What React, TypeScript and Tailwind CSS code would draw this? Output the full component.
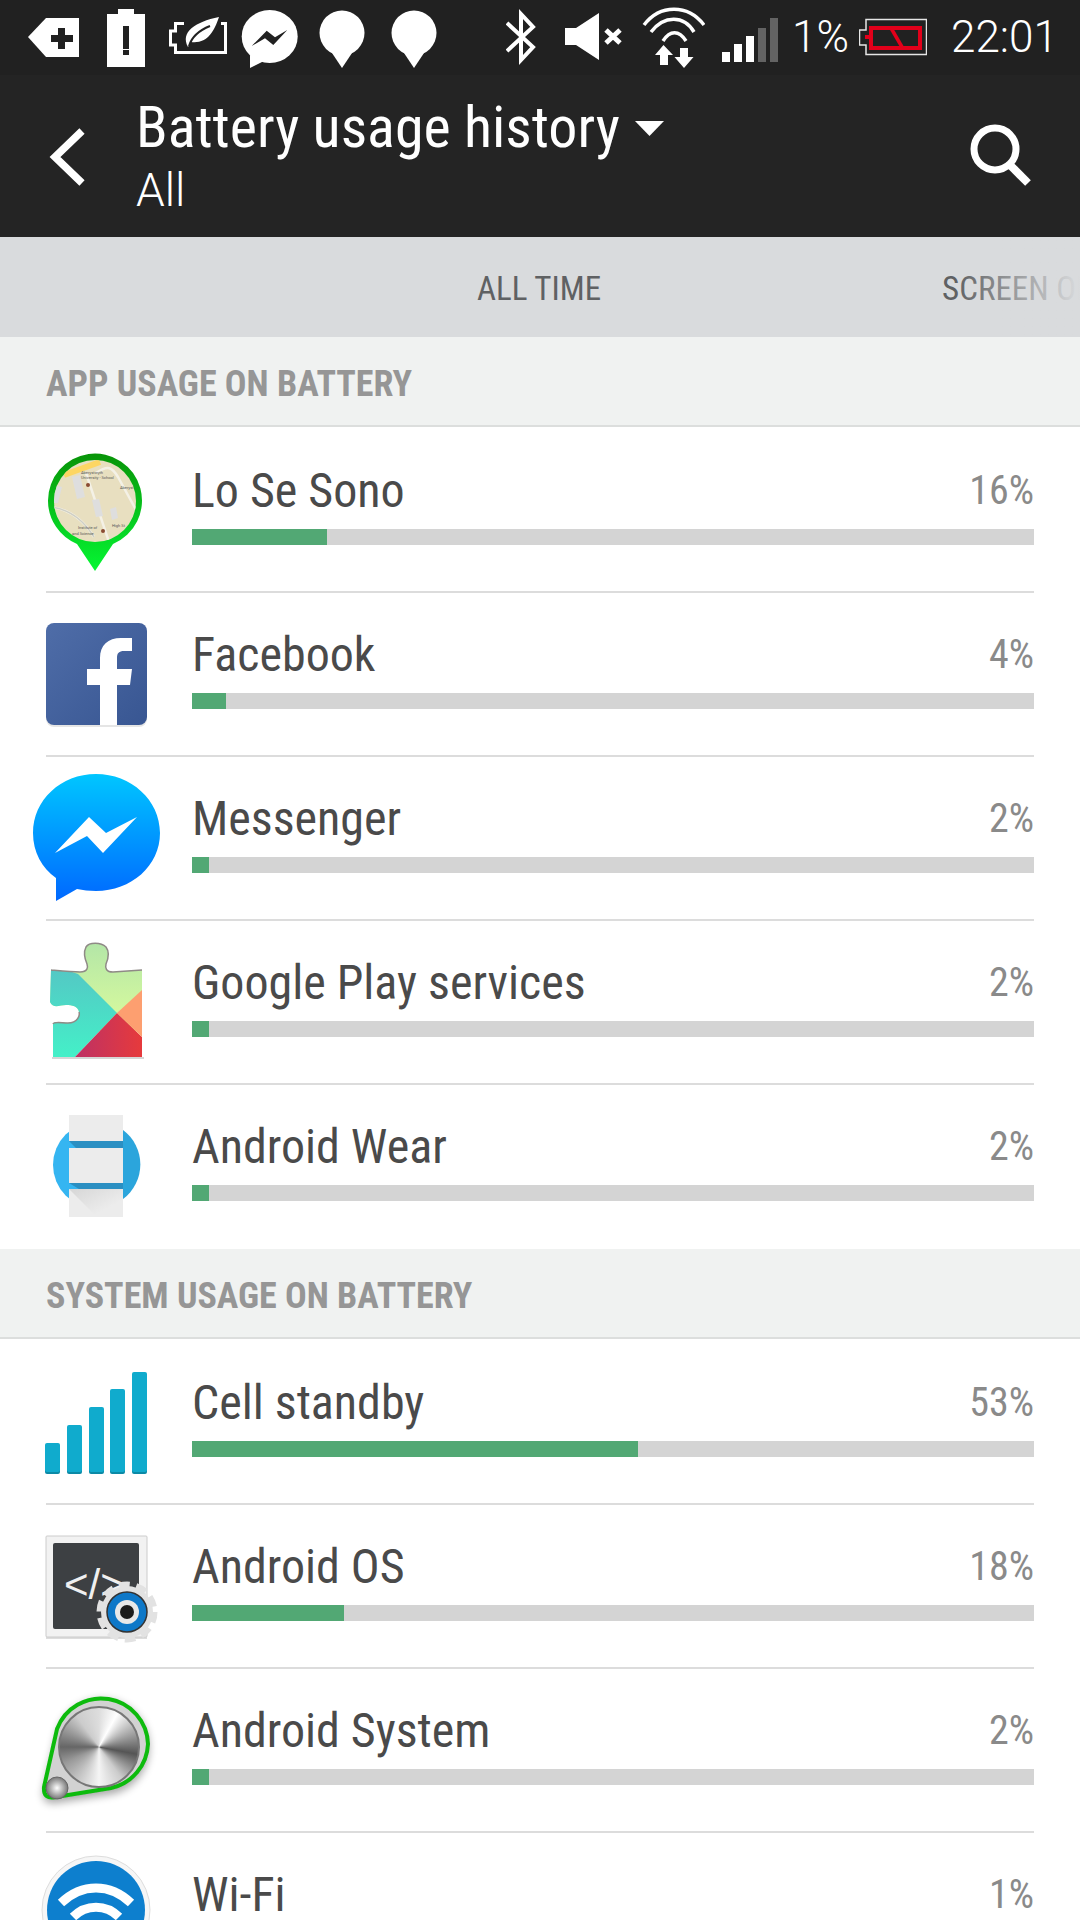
import React from 'react';

const CONDENSED = 'font-["Roboto",sans-serif] [font-stretch:75%]';

type RowData = { name: string; pct: number; icon: React.ReactNode };

// status bar icons use screen coordinates in their viewBox, so numbers read straight off the screenshot
const TagIcon = () => (
  <svg width="51" height="75" viewBox="28 0 51 75">
    <path d="M28 37 46 18H79V57H46Z" fill="#fff" />
    <path d="M51 35H58V28H65V35H73V42H65V49H58V42H51Z" fill="#212121" />
  </svg>
);

const AlertIcon = () => (
  <svg width="38" height="75" viewBox="107 0 38 75">
    <path d="M118 9H134V14H145V67H107V14H118Z" fill="#fff" />
    <path d="M123 26H129V49H123ZM123 50H129V55H123Z" fill="#212121" />
  </svg>
);

const LeafIcon = () => (
  <svg width="58" height="75" viewBox="169 0 58 75">
    <path d="M184 23.5H175.5V31H170.5V45H175.5V52.5H225.5V23.5H221" fill="none" stroke="#fff" strokeWidth="3" />
    <path d="M188 47C180 32 195 22 219 17 214 32 207 44 191 42Z" fill="#fff" />
    <path d="M189 46C192 36 200 30 210 26" fill="none" stroke="#212121" strokeWidth="2" />
  </svg>
);

const MessengerGlyph = () => (
  <svg width="58" height="75" viewBox="241 0 58 75">
    <ellipse cx="269.7" cy="36.5" rx="28" ry="26.5" fill="#fff" />
    <path d="M250 55V68L266 60Z" fill="#fff" />
    <path d="M251.7 46 266.7 30.7 275 37.3 287.3 30 273.3 45 265 38.3Z" fill="#212121" />
  </svg>
);

const PinIcon = ({ className }: { className: string }) => (
  <svg className={className} width="46" height="75" viewBox="0 0 46 75">
    <circle cx="23" cy="33" r="22.5" fill="#fff" />
    <path d="M11 50 23 68 35 50Z" fill="#fff" />
  </svg>
);

const BluetoothIcon = () => (
  <svg width="30" height="75" viewBox="504 0 30 75">
    <path d="M505 23 531 47 519 60V14L531 27 505 51" fill="none" stroke="#fff" strokeWidth="4" />
  </svg>
);

const MuteIcon = () => (
  <svg width="57" height="75" viewBox="563 0 57 75">
    <path d="M563 28H574L597 13V60L574 45H563Z" fill="#fff" />
    <path d="M604 30 618 43M618 30 604 43" stroke="#fff" strokeWidth="5" />
  </svg>
);

const WifiIcon = () => (
  <svg width="63" height="75" viewBox="640 0 63 75">
    <path d="M642 25C658 4 686 4 702 25" fill="none" stroke="#fff" strokeWidth="3.5" />
    <path d="M649 32C662 15 682 15 692 32" fill="none" stroke="#fff" strokeWidth="3.5" />
    <path d="M661 41C668 30 677 30 684 41" fill="none" stroke="#fff" strokeWidth="3.5" />
    <path d="M661.5 45 671 55H666V65H658V55H653Z" fill="#fff" />
    <path d="M682 68 672.5 57H678V48H686V57H691.5Z" fill="#fff" />
  </svg>
);

const SignalIcon = () => (
  <svg width="56" height="75" viewBox="720 0 56 75">
    <path d="M720 52H728V62H720ZM732 44H740V62H732ZM744 36H752V62H744Z" fill="#fff" />
    <path d="M756 28H764V62H756ZM768 18H776V62H768Z" fill="#636363" />
  </svg>
);

const BatteryIcon = () => (
  <svg width="68" height="75" viewBox="857 0 68 75">
    <path d="M864 30V19.5H924.5V54.5H864V45H857.5V30Z" fill="none" stroke="#e6e6e6" strokeWidth="1.5" />
    <path d="M863 37H869" stroke="#e2001a" strokeWidth="4" />
    <rect x="869" y="28" width="49" height="20" fill="none" stroke="#e2001a" strokeWidth="4" />
    <path d="M889 28 900 47" stroke="#e2001a" strokeWidth="3.5" />
  </svg>
);

// row icons are drawn in a 192x162 box, same origin as the row
const RowIcon = ({ children }: { children: React.ReactNode }) => (
  <svg className="shrink-0 overflow-visible" width="192" height="162" viewBox="0 0 192 162">
    {children}
  </svg>
);

const MapPin = () => (
  <RowIcon>
    <defs>
      <linearGradient id="ring" x1="0" y1="0" x2="0" y2="1">
        <stop offset="0" stopColor="#089408" />
        <stop offset="1" stopColor="#05f733" />
      </linearGradient>
      <clipPath id="mapclip">
        <circle cx="95" cy="72" r="41" />
      </clipPath>
    </defs>
    <path d="M48 72A47 47 0 1 1 113 115L95 142 77 115A47 47 0 0 1 48 72Z" fill="url(#ring)" />
    <g clipPath="url(#mapclip)">
      <rect x="50" y="28" width="90" height="90" fill="#e8dfc0" />
      <path d="M64 46 100 33" stroke="#fdd663" strokeWidth="6" />
      <path d="M86 44 110 116M96 44C108 36 112 38 118 48L140 88M50 78C70 80 84 92 94 108" fill="none" stroke="#f4f1e6" strokeWidth="2.5" />
      <path d="M50 78C70 80 84 92 94 108" fill="none" stroke="#cfcfc4" strokeWidth="1.5" />
      <path d="M72 48 80 46 85 68 77 70ZM92 71 99 70 103 87 96 88ZM110 80 116 78 118 89 112 91ZM54 56 62 58 58 74 54 74Z" fill="#dedede" />
      <text x="81" y="45" fontSize="4" fill="#555" fontFamily="Roboto, sans-serif">Aberystwyth</text>
      <text x="81" y="50" fontSize="4" fill="#555" fontFamily="Roboto, sans-serif">University - School</text>
      <text x="120" y="60" fontSize="4" fill="#555" fontFamily="Roboto, sans-serif">Aberyst</text>
      <text x="112" y="98" fontSize="4" fill="#555" fontFamily="Roboto, sans-serif">High St</text>
      <text x="78" y="100" fontSize="4" fill="#555" fontFamily="Roboto, sans-serif">Institute of</text>
      <text x="72" y="106" fontSize="4" fill="#555" fontFamily="Roboto, sans-serif">and Science</text>
      <circle cx="88" cy="56" r="2" fill="#8a4b32" />
      <circle cx="103" cy="102" r="2" fill="#8a4b32" />
    </g>
  </RowIcon>
);

const FacebookIcon = () => (
  <RowIcon>
    <defs>
      <linearGradient id="fb" x1="0" y1="0" x2="1" y2="1">
        <stop offset="0" stopColor="#4f6da8" />
        <stop offset="1" stopColor="#385692" />
      </linearGradient>
    </defs>
    <rect x="46" y="32" width="101" height="102" rx="8" fill="#000" opacity="0.1" />
    <rect x="46" y="30" width="101" height="102" rx="8" fill="url(#fb)" />
    <path d="M100 132V92H87V76H100V65C100 52 108 45 121 45H132V58H124C119 58 117 60 117 65V76H132L130 92H117V132Z" fill="#fff" />
  </RowIcon>
);

const MessengerIcon = () => (
  <RowIcon>
    <defs>
      <linearGradient id="msg" x1="0" y1="0" x2="0" y2="1">
        <stop offset="0" stopColor="#00c6ff" />
        <stop offset="1" stopColor="#0068ff" />
      </linearGradient>
    </defs>
    <path d="M96 17C131 17 160 43 160 76 160 109 131 134 96 134 89 134 83 133 77 132L56 144V121C42 111 33 95 33 76 33 43 61 17 96 17Z" fill="url(#msg)" />
    <path d="M55 96 89 60 106 76 137 60 103 96 87 79Z" fill="#fff" />
  </RowIcon>
);

const PlayIcon = () => (
  <RowIcon>
    <defs>
      <clipPath id="puzzle">
        <path d="M51 49C62 50 72 51 80 51 88 51 88 46 87 43 84 36 84 30 86 26 89 21 101 21 106 26 109 30 109 36 106 43 105 47 106 51 113 51L142 49V136H53L53 103C54 100 62 102 68 102 78 102 80 94 79 91 78 85 72 84 66 84 60 84 53 88 50 81Z" />
      </clipPath>
      <linearGradient id="pgreen" x1="0" y1="0" x2="0" y2="1">
        <stop offset="0" stopColor="#b0e4a8" />
        <stop offset="1" stopColor="#dcfd9c" />
      </linearGradient>
      <linearGradient id="pteal" x1="0" y1="0" x2="0" y2="1">
        <stop offset="0" stopColor="#55c4c4" />
        <stop offset="1" stopColor="#44f0c8" />
      </linearGradient>
      <linearGradient id="pred" x1="0" y1="0" x2="1" y2="0">
        <stop offset="0" stopColor="#bd3165" />
        <stop offset="1" stopColor="#e63a3c" />
      </linearGradient>
    </defs>
    <rect x="52" y="136" width="92" height="2" fill="#999" opacity="0.4" />
    <g clipPath="url(#puzzle)">
      <path d="M40 15H150V110H40Z" fill="url(#pgreen)" />
      <path d="M40 40 78 53 117 92 75 136H40Z" fill="url(#pteal)" />
      <path d="M75 136 117 92 142 116V136Z" fill="url(#pred)" />
      <path d="M142 69V116L117 92Z" fill="#fd9f70" />
    </g>
    <path d="M51 49C62 50 72 51 80 51 88 51 88 46 87 43 84 36 84 30 86 26 89 21 101 21 106 26 109 30 109 36 106 43 105 47 106 51 113 51L142 49" fill="none" stroke="#8f8a86" strokeWidth="1.5" />
    <path d="M53 103C54 100 62 102 68 102 78 102 80 94 79 91" fill="none" stroke="#8f8a86" strokeWidth="1.5" />
  </RowIcon>
);

const WearIcon = () => (
  <RowIcon>
    <defs>
      <linearGradient id="wearshade" x1="0" y1="0" x2="1" y2="1">
        <stop offset="0" stopColor="#d6d6d6" />
        <stop offset="0.7" stopColor="#ececec" />
      </linearGradient>
    </defs>
    <circle cx="96" cy="80" r="43" fill="#35b5f1" />
    <path d="M123 45A43 43 0 0 1 123 114Z" fill="#2ba5dc" />
    <path d="M69 56H123V66H79ZM69 98H123L123 104H79Z" fill="#2b8fc2" />
    <rect x="69" y="30" width="54" height="26" fill="#ececec" />
    <rect x="69" y="63" width="54" height="35" fill="#ececec" />
    <rect x="69" y="104" width="54" height="28" fill="#ececec" />
    <path d="M69 104H123V132H97Z" fill="url(#wearshade)" />
  </RowIcon>
);

const CellIcon = () => (
  <RowIcon>
    {[
      [45, 102],
      [67, 84],
      [89, 66],
      [110, 48],
      [132, 31],
    ].map(([x, y]) => (
      <g key={x}>
        <rect x={x} y={y + 2} width="15" height={131 - y} rx="2" fill="#0c8aa6" />
        <rect x={x} y={y} width="15" height={131 - y} rx="2" fill="#10abcd" />
      </g>
    ))}
  </RowIcon>
);

const OsIcon = () => (
  <RowIcon>
    <rect x="46" y="33" width="101" height="101" fill="#bbb" opacity="0.5" />
    <rect x="46" y="31" width="101" height="101" rx="1" fill="#f2f2f2" stroke="#ccc" />
    <rect x="53" y="38" width="86" height="86" rx="2" fill="#3d4043" />
    <text x="64" y="94" fontSize="42" fill="#f0f0f0" fontFamily="Liberation Sans, sans-serif">
      {'</>'}
    </text>
    <circle cx="127" cy="107" r="26" fill="#e2e2e2" />
    <circle cx="127" cy="107" r="27" fill="none" stroke="#e2e2e2" strokeWidth="7" strokeDasharray="10.5 6.5" />
    <circle cx="127" cy="107" r="20" fill="#0e78c8" stroke="#333" strokeWidth="1.5" />
    <circle cx="127" cy="107" r="12" fill="#e8e8e8" />
    <circle cx="127" cy="107" r="7" fill="#1c1c1c" />
  </RowIcon>
);

const SystemIcon = () => (
  <RowIcon>
    <defs>
      <filter id="sysblur" x="-30%" y="-30%" width="160%" height="160%">
        <feGaussianBlur stdDeviation="4" />
      </filter>
      <filter id="syssoft">
        <feGaussianBlur stdDeviation="0.6" />
      </filter>
      <radialGradient id="ball">
        <stop offset="0" stopColor="#fff" />
        <stop offset="1" stopColor="#777" />
      </radialGradient>
    </defs>
    <path d="M149 78A47 47 0 0 0 57 64L43 123Q42 136 56 134L112 125A47 47 0 0 0 149 78Z" fill="#000" opacity="0.35" filter="url(#sysblur)" />
    <path d="M148 75A47 47 0 0 0 57 60L44 118Q43 131 56 128L111 119A47 47 0 0 0 148 75Z" fill="#d2d2d2" stroke="#0dbb0d" strokeWidth="4" filter="url(#syssoft)" />
    <foreignObject x="58" y="37" width="82" height="82">
      <div className="h-[82px] w-[82px] rounded-full border-2 border-[#777] bg-[conic-gradient(#ddd,#fff_8%,#888_22%,#555_28%,#ccc_40%,#f5f5f5_50%,#999_68%,#666_75%,#ccc_90%,#ddd)]" />
    </foreignObject>
    <circle cx="57" cy="119" r="11" fill="url(#ball)" stroke="#666" />
  </RowIcon>
);

const WifiRowIcon = () => (
  <RowIcon>
    <circle cx="96" cy="77" r="54" fill="#f6f6f6" stroke="#ddd" />
    <circle cx="96" cy="77" r="49" fill="#0d7fce" />
    <path d="M61 70C82 50 110 50 131 70" fill="none" stroke="#fff" strokeWidth="9" />
    <path d="M73 84C86 71 106 71 119 84" fill="none" stroke="#fff" strokeWidth="9" />
  </RowIcon>
);

const appRows: RowData[] = [
  { name: 'Lo Se Sono', pct: 16, icon: <MapPin /> },
  { name: 'Facebook', pct: 4, icon: <FacebookIcon /> },
  { name: 'Messenger', pct: 2, icon: <MessengerIcon /> },
  { name: 'Google Play services', pct: 2, icon: <PlayIcon /> },
  { name: 'Android Wear', pct: 2, icon: <WearIcon /> },
];

const systemRows: RowData[] = [
  { name: 'Cell standby', pct: 53, icon: <CellIcon /> },
  { name: 'Android OS', pct: 18, icon: <OsIcon /> },
  { name: 'Android System', pct: 2, icon: <SystemIcon /> },
  { name: 'Wi-Fi', pct: 1, icon: <WifiRowIcon /> },
];

const Row = ({ row, last }: { row: RowData; last: boolean }) => (
  <div>
    <div className="flex h-[162px]">
      {row.icon}
      <div className="mr-[46px] flex flex-1 flex-col pt-[38px]">
        <div className="flex items-center justify-between">
          <span className={`${CONDENSED} text-[48px] leading-[48px] text-[#4a4a4a]`}>{row.name}</span>
          <span className={`${CONDENSED} text-[40px] leading-[48px] text-[#8a8a8a]`}>{row.pct}%</span>
        </div>
        <div className="mt-[14px] h-[16px] w-full bg-[#d4d4d4]">
          <div className="h-full bg-[#52a874]" style={{ width: `${row.pct}%` }} />
        </div>
      </div>
    </div>
    <div className={last ? 'h-[2px]' : 'mx-[46px] h-[2px] bg-[#dcdcdc]'} />
  </div>
);

const Section = ({ title, rows }: { title: string; rows: RowData[] }) => (
  <div>
    <div className="flex h-[90px] items-center border-b-2 border-[#dcdedd] bg-[#f0f2f1] pl-[46px] pt-[6px]">
      <span className={`${CONDENSED} text-[36px] font-bold text-[#969696]`}>{title}</span>
    </div>
    <div className="pt-[2px]">
      {rows.map((r, i) => (
        <Row key={r.name} row={r} last={i === rows.length - 1} />
      ))}
    </div>
  </div>
);

export default function App() {
  return (
    <div className="h-[1920px] w-[1080px] overflow-hidden bg-white font-['Roboto',sans-serif]">
      <div className="flex h-[75px] items-center bg-[#212121] pl-[28px] text-white">
        <TagIcon />
        <div className="ml-[28px]"><AlertIcon /></div>
        <div className="ml-[24px]"><LeafIcon /></div>
        <div className="ml-[14px]"><MessengerGlyph /></div>
        <PinIcon className="ml-[20px]" />
        <PinIcon className="ml-[26px]" />
        <div className="ml-[69px]"><BluetoothIcon /></div>
        <div className="ml-[29px]"><MuteIcon /></div>
        <div className="ml-[20px]"><WifiIcon /></div>
        <div className="ml-[17px]"><SignalIcon /></div>
        <span className="ml-[14px] w-[67px] text-[44px] font-light leading-[75px]">1%</span>
        <BatteryIcon />
        <span className="ml-[24px] text-[44px] font-light leading-[75px]">22:01</span>
      </div>
      <div className="flex h-[162px] bg-[#242424]">
        <svg className="ml-[47px] mt-[51px] shrink-0" width="40" height="62" viewBox="0 0 40 62">
          <path d="M35 5 8 31 35 57" fill="none" stroke="#fff" strokeWidth="7.5" />
        </svg>
        <div className="ml-[49px] pt-[19px]">
          <div className="flex items-center">
            <span className={`${CONDENSED} text-[58px] leading-[66px] text-white`}>Battery usage history</span>
            <svg className="ml-[15px] mt-[2px]" width="29" height="15" viewBox="0 0 29 15">
              <path d="M0 0H29L14.5 15Z" fill="#fff" />
            </svg>
          </div>
          <div className="mt-[4px] text-[46px] font-light leading-[52px] text-white">All</div>
        </div>
        <svg className="ml-auto mr-[49px] mt-[46px] shrink-0" width="64" height="68" viewBox="0 0 64 68">
          <circle cx="28" cy="28" r="21" fill="none" stroke="#fff" strokeWidth="7" />
          <path d="M43 44 61 62" stroke="#fff" strokeWidth="8" />
        </svg>
      </div>
      <div className="relative flex h-[100px] items-center overflow-hidden whitespace-nowrap bg-[#d9dbdd] pl-[477px] pt-[3px]">
        <span className={`${CONDENSED} text-[33px] text-[#5f6163]`}>ALL TIME</span>
        <span className={`${CONDENSED} ml-[341px] text-[33px] text-[#5f6163]`}>SCREEN ON</span>
        <div className="absolute inset-y-0 right-0 w-[125px] bg-gradient-to-r from-[#d9dbdd00] to-[#d9dbdd]" />
      </div>
      <Section title="APP USAGE ON BATTERY" rows={appRows} />
      <Section title="SYSTEM USAGE ON BATTERY" rows={systemRows} />
    </div>
  );
}
